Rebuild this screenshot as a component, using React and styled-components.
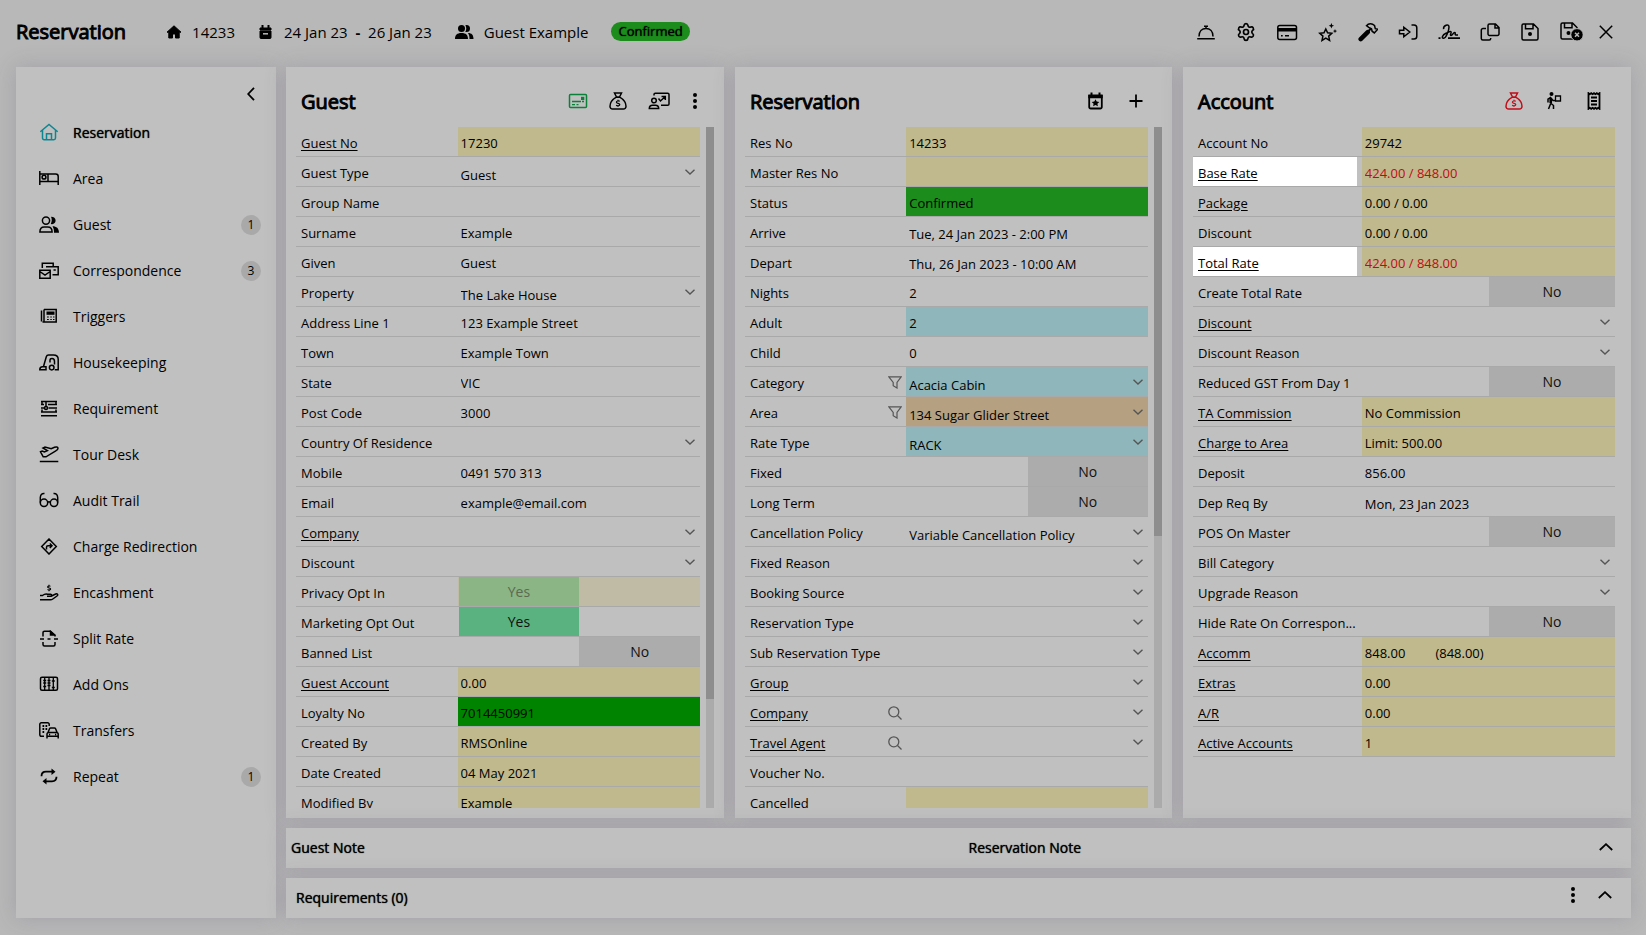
import React from 'react'
import styled, { createGlobalStyle, css } from 'styled-components'
import { Settings } from 'lucide-react'

const GlobalStyle = createGlobalStyle`
  * {
    box-sizing: border-box;
  }
  body {
    margin: 0;
    background: #b8b8b8;
    color: #000;
    font-family: 'Open Sans', 'Noto Sans', sans-serif;
    font-size: 13px;
  }
  button, input, select {
    font: inherit;
    color: inherit;
  }
`

const fills = {
  yellow: '#bfb98d',
  paleYellow: '#bfbba4',
  green: '#1c8c1c',
  darkGreen: '#008400',
  cyan: '#8fb6ba',
  tan: '#b5a182',
}

const heavy = css`
  -webkit-text-stroke: 1px currentColor;
`

const Page = styled.div`
  display: flex;
  flex-direction: column;
  height: 100vh;
  min-height: 600px;
  padding: 0 15px 17px 16px;
`

const TopBar = styled.header`
  display: flex;
  align-items: center;
  justify-content: space-between;
  flex: none;
  height: 67px;
  padding: 0 18px 4px 0;
`

const Summary = styled.div`
  display: flex;
  align-items: center;
  gap: 23px;
  font-size: 15px;
`

const PageTitle = styled.h1`
  ${heavy}
  margin: 0 17px 0 0;
  font-size: 20px;
  font-weight: 400;
`

const Fact = styled.div`
  display: flex;
  align-items: center;
  gap: 10px;
  white-space: pre;
`

const Pill = styled.span`
  height: 19px;
  padding: 0 7px;
  border-radius: 10px;
  background: ${fills.green};
  font-size: 13px;
  line-height: 19px;
  text-shadow: 0 0 1px #000;
`

const Toolbar = styled.div`
  display: flex;
  align-items: center;
  gap: ${(p) => p.$gap || 20}px;
`

const IconButton = styled.button`
  display: flex;
  align-items: center;
  justify-content: center;
  min-width: 10px;
  padding: 0;
  border: none;
  background: transparent;
  color: ${(p) => p.$color || '#000'};
  cursor: pointer;
`

const Body = styled.div`
  display: flex;
  flex: 1;
  gap: 10px;
  min-height: 0;
`

const Card = styled.section`
  display: flex;
  min-width: 0;
  background: #c0c0c0;
  box-shadow: 0 0 20px rgba(86, 76, 106, 0.24);
`

const Sidebar = styled(Card).attrs({ as: 'nav' })`
  flex: none;
  flex-direction: column;
  width: 260px;
`

const Collapse = styled(IconButton)`
  align-self: flex-end;
  width: 20px;
  height: 43px;
  margin: 0 15px 0 0;
  padding-top: 10px;
`

const NavItem = styled.a`
  display: grid;
  grid-template-columns: 20px 1fr 20px;
  align-items: center;
  gap: 14px;
  height: 46px;
  padding: 0 15px 2px 23px;
  font-size: 14px;
  color: #000;
  text-decoration: none;
  text-shadow: ${(p) => (p.$active ? '0 0 1px #000' : 'none')};

  svg {
    color: ${(p) => (p.$active ? '#0e8690' : '#000')};
  }
`

const Badge = styled.span`
  height: 20px;
  margin-top: 2px;
  border-radius: 50%;
  background: #a9a9a9;
  font-size: 12px;
  line-height: 20px;
  text-align: center;
`

const Main = styled.main`
  display: flex;
  flex: 1;
  flex-direction: column;
  gap: 10px;
  min-width: 0;
`

const Panels = styled.div`
  display: grid;
  flex: 1;
  grid-template-columns: 438fr 437fr 448fr;
  gap: 11px;
  min-height: 0;
`

const PanelCard = styled(Card)`
  flex-direction: column;
  min-height: 0;
  padding: 0 10px 10px;
`

const PanelHead = styled.div`
  display: flex;
  align-items: center;
  justify-content: space-between;
  flex: none;
  height: 60px;
  padding: 8px ${(p) => p.$inset}px 0 5px;
`

const PanelTitle = styled.h2`
  ${heavy}
  margin: 0;
  font-size: 20px;
  font-weight: 400;
`

const PanelBody = styled.div`
  display: flex;
  flex: 1;
  gap: 6px;
  min-height: 0;
`

const Fields = styled.div`
  flex: 1;
  min-width: 0;
  overflow-y: auto;
  scrollbar-width: none;
`

const Track = styled.div`
  width: 8px;
  background: #ababab;
`

const Thumb = styled.div`
  background: #8e8e8e;
`

const Row = styled.div`
  display: grid;
  grid-template-columns: 2fr 3fr;
  height: 30px;
  border-bottom: 1px solid #a9a9a9;
  background: linear-gradient(to right, transparent 40%, ${(p) => p.$fill || 'transparent'} 40%);
`

const LabelCell = styled.div`
  display: flex;
  align-items: center;
  justify-content: space-between;
  min-width: 0;
  margin-right: ${(p) => (p.$lit ? 5 : 0)}px;
  padding: 2px 4px 0 5px;
  background: ${(p) => (p.$lit ? '#fff' : 'transparent')};
  white-space: nowrap;

  a {
    color: #000;
    text-underline-offset: 2px;
  }
  svg {
    color: #555;
  }
`

const control = css`
  width: 100%;
  min-width: 0;
  height: 29px;
  border: none;
  outline: none;
  border-radius: 0;
  background: transparent;
  text-align: left;
`

const TextInput = styled.input`
  ${control}
  padding: ${(p) => (p.$date ? 4 : 2)}px 3px 0;
  color: ${(p) => (p.$red ? '#bf0c12' : '#000')};
`

const Amounts = styled.output`
  display: flex;
  align-items: center;
  gap: 30px;
  padding: 2px 3px 0;
`

const SelectBox = styled.div`
  display: grid;
  grid-template-columns: 1fr 15px;
  align-items: center;
  min-width: 0;

  svg {
    grid-area: 1 / 2;
    color: #555;
    pointer-events: none;
  }
`

const Select = styled.select`
  ${control}
  grid-area: 1 / 1 / 2 / 3;
  appearance: none;
  padding: 7px 15px 0 3px;
`

const Switch = styled.button`
  display: grid;
  grid-template-columns: 1fr 1fr;
  height: 29px;
  padding: 0 0 0 1px;
  border: none;
  background: ${(p) => (p.disabled ? fills.paleYellow : 'transparent')};
  font-size: 14px;
  line-height: 28px;
  color: ${(p) => (p.disabled ? '#5c6a52' : '#111')};
`

const SwitchHalf = styled.span`
  grid-column: ${(p) => (p.$on ? 1 : 2)};
  padding-top: 1px;
  background: ${(p) => (!p.$on ? '#acacac' : p.$muted ? '#8bb584' : '#5ab280')};
`

const Strip = styled(Card)`
  flex: none;
  display: grid;
  grid-template-columns: 1fr 1fr;
  align-items: center;
  height: 40px;
  padding: 0 ${(p) => p.$pad}px 2px;
`

const StripTitle = styled.h3`
  margin: 0;
  font-size: 14px;
  font-weight: 400;
  text-shadow: 0 0 1px #000;
`

const StripEnd = styled.div`
  display: flex;
  align-items: center;
  justify-content: space-between;
  padding: 0 ${(p) => p.$right}px 0 10px;
`

const StripActions = styled.div`
  display: flex;
  gap: 20px;
  margin-left: auto;
  padding-bottom: 4px;
`

const FLOPPY = 'M2.5 1h10L17 5.5v10a1.5 1.5 0 0 1-1.5 1.5h-13A1.5 1.5 0 0 1 1 15.5v-13A1.5 1.5 0 0 1 2.5 1zM4.5 1v4.8H12V1'

const bag = (
  <>
    <path d="M6.5 1h7l-2 4h-3zM8.300 5.200C4.500 7.500 2 11 2 14.200A2.600 2.600 0 0 0 4.600 17h10.800a2.600 2.600 0 0 0 2.600-2.800c0-3.200-2.500-6.700-6.300-9z" />
    <path strokeWidth="1.200" d="M11.800 9.300c-1.400-.8-3.500-.4-3.400.9.100 1.500 3.400.8 3.400 2.400 0 1.300-2.300 1.600-3.700.7M10 7.800v1M10 13.700v1" />
  </>
)

const dots = (
  <g fill="currentColor" stroke="none">
    <circle cx="2" cy="2" r="2" />
    <circle cx="2" cy="8" r="2" />
    <circle cx="2" cy="14" r="2" />
  </g>
)

// name: [width, height, drawing]
const glyphs = {
  houseSolid: [16, 14, <path fill="currentColor" strokeWidth="1" d="M8 .8L1 7.200h1.800V13h3.700V9h3v4h3.700V7.200H15z" />],
  calendarSolid: [16, 14, <><path fill="currentColor" strokeWidth="1" d="M2 3h11v2H2zM2 6h11v6.500a1 1 0 0 1-1 1H3a1 1 0 0 1-1-1z" /><path strokeWidth="2" d="M4.500 0v3M10.500 0v3" /><path stroke="#b8b8b8" d="M5 8.800h5" /></>],
  usersSolid: [19, 14, <g fill="currentColor" stroke="none"><circle cx="6.500" cy="3.500" r="3.500" /><path d="M0 14c0-4 2-6 6.500-6s6.500 2 6.500 6zM11.500 0a3.500 3.500 0 0 1 0 7c-.5 0-.8-.1-1.200-.2 1.300-1.900 1.300-4.700 0-6.600zM13 8c3.800 0 5.500 2 5.500 6h-4c0-2.600-.5-4.600-1.500-6z" /></g>],
  bell: [20, 18, <path d="M3 13.500C3 8.500 6 5.500 10 5.500s7 3 7 8M8 3.200h4M10 3.200v2.300M1.200 15.700h17.600" />],
  card: [22, 18, <><rect x="1.800" y="2.500" width="18.700" height="14" rx="2" /><path fill="currentColor" stroke="none" d="M2 5h18.500v3.500H2z" /><path d="M5 12.700h1.700M9 12.700h4" /></>],
  stars: [20, 20, <><path d="M7.800 7L9.600 10.800l4.200.5-3.100 2.800.9 4.300-3.800-2.200L4 18.400l.9-4.300-3.100-2.800 4.200-.5z" /><path fill="currentColor" stroke="none" d="M13.400 1l.8 1.900 1.900.8-1.900.8-.8 1.900-.8-1.900-1.900-.8 1.900-.8zM17 7l.6 1.500 1.500.6-1.500.6L17 11.200l-.6-1.500-1.500-.6 1.500-.6z" /></>],
  hammer: [20, 20, <><path strokeWidth="4.500" strokeLinecap="round" d="M2.700 17.200l7-7" /><path strokeWidth="2" d="M9 10.500l4-4" /><path d="M8.500 3.700c2-2.400 5.500-2.700 8-.2l.8 3.200 2.400.6-3.400 3.600-2.200-1.700-.6-2.400-2.800-1.400z" /></>],
  enter: [20, 16, <path d="M1.500 6.300h4.300V3.200L11.800 8l-6 4.800V9.700H1.500zM13.500 1H16a2.800 2.800 0 0 1 2.800 2.800v8.400A2.800 2.800 0 0 1 16 15h-2.500" />],
  signature: [22, 18, <><path d="M5.600 6.200C5 2.300 11 .2 11 4c0 4-3 11-5.300 11.300-2.500.3-1.500-3.500 2.300-5 2.500-1 4.500-2.300 5-1.600.8 1-1.500 3.500 0 3.800 1.600.2 2-3.200 3.800-3 1.200.2-.5 2.300 1.200 2.500H20" /><path strokeWidth="1.800" d="M10 15.200h12M.5 15.200h2" /></>],
  copy: [20, 18, <path d="M9.500 1h6L19 4.500v6.500a1.500 1.500 0 0 1-1.500 1.500h-8A1.500 1.500 0 0 1 8 11V2.500A1.500 1.500 0 0 1 9.500 1zM6 5.500H3a1.700 1.700 0 0 0-1.700 1.700v8.300A1.500 1.500 0 0 0 2.800 17h6.400a1.500 1.500 0 0 0 1.500-1.500v-.5M15 1.500V5h3.500" />],
  save: [20, 18, <g transform="translate(1 0)"><path d={FLOPPY} /><circle cx="9" cy="11" r="2" fill="currentColor" stroke="none" /></g>],
  saveClose: [23, 19, <><path d={FLOPPY} /><circle cx="8.500" cy="11" r="2" fill="currentColor" stroke="none" /><circle cx="17" cy="12.800" r="6.200" fill="currentColor" stroke="#b8b8b8" strokeWidth="1" /><path stroke="#b8b8b8" d="M15 10.800l4 4M19 10.800l-4 4" /></>],
  close: [14, 14, <path d="M.8.8l12.400 12.400M13.200.8L.8 13.200" />],
  left: [8, 14, <path strokeWidth="1.800" d="M7 .8L1.200 7 7 13.200" />],
  up: [14, 8, <path strokeWidth="1.800" d="M.8 7L7 1.200 13.200 7" />],
  down: [10, 6, <path strokeWidth="1.400" d="M.5.800L5 5 9.500.800" />],
  funnel: [14, 13, <path strokeWidth="1.200" d="M.8.800h12.400L9 6.500V12l-3.800-2.300V6.500z" />],
  search: [14, 14, <><circle cx="5.800" cy="5.800" r="5" strokeWidth="1.300" /><path strokeWidth="1.300" d="M9.500 9.500l4 4" /></>],
  plus: [20, 14, <path strokeWidth="1.800" d="M10 .5v13M3.500 7h13" />],
  dots: [4, 16, dots],
  idCard: [20, 16, <><rect x="1.500" y="1.500" width="17" height="13" rx="1" /><path d="M4 8.500h9M4 11.700h3M8.500 11.700h2M14 8.500h2" strokeWidth="1.300" /><path fill="currentColor" stroke="none" d="M13 3.800h3.300V7H13z" /></>],
  bag: [20, 18, bag],
  presenter: [22, 18, <><circle cx="6" cy="8.500" r="2.300" /><path d="M1.300 16.500c0-2.200 1.300-3.300 3.200-3.300h3c1.900 0 3.200 1.100 3.200 3.300zM6 3.500V2.500A1.300 1.300 0 0 1 7.300 1.200h12.400A1.300 1.300 0 0 1 21 2.500v9.500a1.300 1.300 0 0 1-1.300 1.300H13M10.500 6.500l2 2.500 4.500-4.200M13.500 4.500h3.800v3.500" /></>],
  calendarStar: [20, 18, <><path strokeWidth="1.800" d="M3.200 4h12.600v11a1.500 1.500 0 0 1-1.500 1.500H4.700A1.500 1.500 0 0 1 3.200 15z" /><path fill="currentColor" stroke="none" d="M2.300 2.500h14.400v3.700H2.300zM9.500 7.300l1.200 2.300 2.600.3-1.900 1.800.5 2.600-2.400-1.200-2.400 1.200.5-2.600-1.900-1.800 2.600-.3z" /><path d="M5.500 .5V4M13.500 .5V4" strokeWidth="2" /></>],
  carrier: [20, 18, <><circle cx="7.500" cy="2" r="2" fill="currentColor" stroke="none" /><path d="M4 10.500V7.200L6.500 5.500l2.500 3h3M6.500 6v5l3 2.500V17M6.500 12l-2 5" /><path strokeWidth="2.500" d="M6.800 6v5" /><path strokeWidth="1.300" d="M11.500 4h5v5h-5z" /></>],
  receipt: [20, 18, <><path strokeWidth="1.800" d="M4.500 1.200l1.300 1L7.200 1.200l1.400 1 1.400-1 1.400 1 1.400-1 1.400 1 1.300-1v15.600l-1.300-1-1.400 1-1.400-1-1.400 1-1.400-1-1.400 1-1.400-1-1.300 1z" /><path strokeWidth="1.800" d="M7 5.500h6M7 9h6M7 12.500h6" /></>],
  house: [20, 18, <path d="M1.300 8.700L10 1.400l8.700 7.300M3.500 7.300V15A1.700 1.700 0 0 0 5.200 16.700h9.600a1.700 1.700 0 0 0 1.700-1.700V7.300M7.500 16.500v-5.700h5v5.700" />],
  bed: [20, 16, <><path d="M.8 1v14M.8 11.500h18.500M19.200 15V6.500a2.500 2.500 0 0 0-2.500-2.500H9v7.500M9 4H.8" /><circle cx="5" cy="7.200" r="1.900" /></>],
  users: [20, 17, <><circle cx="7" cy="4.600" r="3.600" /><path d="M.9 16c0-3.300 2-5 4.300-5h3.600c2.300 0 4.300 1.700 4.300 5z" /><path fill="currentColor" stroke="none" d="M12 .8c3 0 4.600 1.500 4.600 3.800S15 8.400 12.800 8.200c-.7 0-1-.3-1-.5 1.200-2 1.300-4.700.2-6.900zM13.500 10.200c4 0 6.500 2 6.500 6.600h-5c0-2.800-.3-4.800-1.500-6.600z" /></>],
  mails: [20, 17, <><path d="M.8 8.200h10.400v8H.8zM.8 9.500L6 13l5.200-3.500M3.300 6V1.200h10.900V4M7 4.700h12.200v8H13.500M14.500 8h2.300" /></>],
  fax: [20, 16, <><path d="M2.500 2.500v11M5 1.500h12.200V14H3.500" /><path strokeWidth="1.200" d="M8 9h1.800M11.300 9h1.500M14 9h1.500M8 11.500h1.800M11.300 11.500h1.500M14 11.500h1.500" /><path fill="currentColor" stroke="none" d="M7.500 3.500h8v3.300h-8z" /><path d="M5 1.500V14" /></>],
  vacuum: [20, 17, <><path d="M.8 15.800c0-2 1-3 2.700-3H7v3zM4.500 12.500L7.300 2.800C7.700 1.500 8.500 1 9.500 1h5c3 0 4.700 1.800 4.700 4.300v10.500h-3.500M11 8.500V6.200C11 5 12 4.500 13 4.500c1.700 0 2.500 1 2.500 3v3" /><circle cx="12.700" cy="13.600" r="2.300" /></>],
  blinds: [20, 17, <><path d="M2 1.500h16M2 4.500h3M9 4.500h9M3 1.500v3M17 1.500v3M2 8h3M9.500 8h8.500M2 12h16M2 15.700h16M3 12V9.500M17 12V9.500" strokeWidth="1.500" /><circle cx="7" cy="8" r="1.500" /><path d="M7 2v4.500" /></>],
  plane: [20, 17, <path d="M.8 15.500h18.500M1.500 5.800l1.700-.8 2.200 1 3-1.400L4 2l2-1 6.200 1.800 3.300-1.500c1.700-.7 3.500-.3 3.500 1s-1 2-2.200 2.600L7 10.800H4.200z" />],
  glasses: [20, 16, <><circle cx="5" cy="10.800" r="3.700" /><circle cx="15" cy="10.800" r="3.700" /><path d="M8.500 10.300c1-.7 2-.7 3 0M1.300 10.500V5.500C1.500 3 2.500 1.200 5.500 1.500M18.700 10.500V5.500c-.2-2.500-1.200-4.300-4.200-4" /></>],
  turn: [20, 17, <path d="M10 1l7.300 7.500L10 16 2.700 8.500zM7.500 11.500V9.200c0-1 .5-1.500 1.500-1.500h3.500M10.800 5.500L13 7.700l-2.200 2.200" />],
  cashHand: [20, 17, <><path d="M1 11.500h2.500c2-1.500 3.500-1.700 5-1.200h3c1.500 0 1.500 2-.2 2H8M12 12.200l4.700-2.200c1.800-.7 2.700 1 1.300 2l-4.200 3c-.7.500-1.300.7-2.300.7H1" /><path strokeWidth="1.200" d="M11.500 2.300c-1.200-.6-2.900-.3-2.800.8.100 1.200 2.900.6 2.900 1.900 0 1-1.900 1.300-3.100.6M10 .8V2M10 6v1.200" /></>],
  pageBreak: [20, 17, <><path d="M4 6.500V2.700A1.500 1.500 0 0 1 5.500 1.200h6L16 5v1.500M4 12v2.500A1.500 1.500 0 0 0 5.500 16h9a1.500 1.500 0 0 0 1.500-1.500V12M1 9h4M8.500 9h3M15 9h4" /><path fill="currentColor" d="M11.500 1.500V5H15z" /></>],
  abacus: [20, 16, <><rect x="1.500" y="1.300" width="17" height="13" rx="1.500" /><path strokeWidth="1.300" d="M5.700 1.500v13M10 1.500v13M14.300 1.500v13" /><path strokeWidth="1.300" d="M4.200 4.500h3M8.500 4.500h3M4.200 7h3M8.500 7h3M4.200 10.500h3M8.500 9.500h3M12.800 5h3M12.800 11.500h3" /></>],
  shuttle: [20, 17, <><path d="M5 14.300H2.300A1.500 1.500 0 0 1 .8 12.800V2.300A1.500 1.500 0 0 1 2.300.8h6.400a1.500 1.500 0 0 1 1.500 1.500V4" /><path strokeWidth="1.800" d="M3.500 4h1.700M6.500 4h1.700M3.500 7h1.700M6.500 7h1.700M3.500 10h1.700" /><path d="M8 16.500v-4.200c0-1 .7-1.800 1.700-1.800h7.800c1 0 1.700.8 1.700 1.800v4.200M9 10.500l1.500-3.700c.2-.5.7-.8 1.200-.8h3.700c.5 0 1 .3 1.200.8l1.500 3.700M8 14.300h11.200M10 12.400h1.200M16 12.400h1.200" /></>],
  repeat: [20, 17, <><path strokeWidth="1.800" d="M2.500 8.200c0-3 1.800-4.500 4.500-4.500h7M17.500 8.800c0 3-1.800 4.500-4.500 4.500H6" /><path fill="currentColor" stroke="none" d="M12.500.5l4 3.200-4 3.200zM7.500 10.100l-4 3.200 4 3.200z" /></>],
}

const Glyph = ({ name }) => {
  const [width, height, drawing] = glyphs[name]
  return (
    <svg
      width={width}
      height={height}
      viewBox={`0 0 ${width} ${height}`}
      fill="none"
      stroke="currentColor"
      strokeWidth="1.500"
      aria-hidden="true"
    >
      {drawing}
    </svg>
  )
}

const navItems = [
  ['Reservation', 'house'],
  ['Area', 'bed'],
  ['Guest', 'users', 1],
  ['Correspondence', 'mails', 3],
  ['Triggers', 'fax'],
  ['Housekeeping', 'vacuum'],
  ['Requirement', 'blinds'],
  ['Tour Desk', 'plane'],
  ['Audit Trail', 'glasses'],
  ['Charge Redirection', 'turn'],
  ['Encashment', 'cashHand'],
  ['Split Rate', 'pageBreak'],
  ['Add Ons', 'abacus'],
  ['Transfers', 'shuttle'],
  ['Repeat', 'repeat', 1],
]

const text = (label, value = '', more) => ({ kind: 'text', label, value, ...more })
const locked = (label, value = '', more) => text(label, value, { fill: 'yellow', readOnly: true, ...more })
const select = (label, value = '', more) => ({ kind: 'select', label, value, ...more })
const toggle = (label, on, more) => ({ kind: 'toggle', label, on, ...more })
const link = true

const guestFields = [
  locked('Guest No', '17230', { link }),
  select('Guest Type', 'Guest'),
  text('Group Name'),
  text('Surname', 'Example'),
  text('Given', 'Guest'),
  select('Property', 'The Lake House'),
  text('Address Line 1', '123 Example Street'),
  text('Town', 'Example Town'),
  text('State', 'VIC'),
  text('Post Code', '3000'),
  select('Country Of Residence'),
  text('Mobile', '0491 570 313'),
  text('Email', 'example@email.com'),
  select('Company', '', { link }),
  select('Discount'),
  toggle('Privacy Opt In', true, { disabled: true }),
  toggle('Marketing Opt Out', true),
  toggle('Banned List', false),
  locked('Guest Account', '0.00', { link }),
  locked('Loyalty No', '7014450991', { fill: 'darkGreen' }),
  locked('Created By', 'RMSOnline'),
  locked('Date Created', '04 May 2021'),
  locked('Modified By', 'Example'),
]

const reservationFields = [
  locked('Res No', '14233'),
  locked('Master Res No'),
  locked('Status', 'Confirmed', { fill: 'green' }),
  text('Arrive', 'Tue, 24 Jan 2023 - 2:00 PM', { date: true }),
  text('Depart', 'Thu, 26 Jan 2023 - 10:00 AM', { date: true }),
  text('Nights', '2'),
  text('Adult', '2', { fill: 'cyan' }),
  text('Child', '0'),
  select('Category', 'Acacia Cabin', { fill: 'cyan', icon: 'funnel' }),
  select('Area', '134 Sugar Glider Street', { fill: 'tan', icon: 'funnel' }),
  select('Rate Type', 'RACK', { fill: 'cyan' }),
  toggle('Fixed', false),
  toggle('Long Term', false),
  select('Cancellation Policy', 'Variable Cancellation Policy'),
  select('Fixed Reason'),
  select('Booking Source'),
  select('Reservation Type'),
  select('Sub Reservation Type'),
  select('Group', '', { link }),
  select('Company', '', { link, icon: 'search' }),
  select('Travel Agent', '', { link, icon: 'search' }),
  text('Voucher No.'),
  locked('Cancelled'),
]

const accountFields = [
  locked('Account No', '29742'),
  locked('Base Rate', '424.00 / 848.00', { link, lit: true, red: true }),
  locked('Package', '0.00 / 0.00', { link }),
  locked('Discount', '0.00 / 0.00'),
  locked('Total Rate', '424.00 / 848.00', { link, lit: true, red: true }),
  toggle('Create Total Rate', false),
  select('Discount', '', { link }),
  select('Discount Reason'),
  toggle('Reduced GST From Day 1', false),
  locked('TA Commission', 'No Commission', { link }),
  locked('Charge to Area', 'Limit: 500.00', { link }),
  text('Deposit', '856.00'),
  text('Dep Req By', 'Mon, 23 Jan 2023', { date: true }),
  toggle('POS On Master', false),
  select('Bill Category'),
  select('Upgrade Reason'),
  toggle('Hide Rate On Correspon...', false),
  { kind: 'amounts', label: 'Accomm', value: ['848.00', '(848.00)'], fill: 'yellow', link },
  locked('Extras', '0.00', { link }),
  locked('A/R', '0.00', { link }),
  locked('Active Accounts', '1', { link }),
]

const Value = ({ id, field }) => {
  const named = { id, 'aria-labelledby': `${id}-label` }
  if (field.kind === 'select') {
    return (
      <SelectBox>
        <Select {...named} defaultValue={field.value}>
          <option>{field.value}</option>
        </Select>
        <Glyph name="down" />
      </SelectBox>
    )
  }
  if (field.kind === 'toggle') {
    return (
      <Switch {...named} type="button" role="switch" aria-checked={field.on} disabled={field.disabled}>
        <SwitchHalf $on={field.on} $muted={field.disabled}>
          {field.on ? 'Yes' : 'No'}
        </SwitchHalf>
      </Switch>
    )
  }
  if (field.kind === 'amounts') {
    return (
      <Amounts {...named}>
        {field.value.map((amount) => (
          <span key={amount}>{amount}</span>
        ))}
      </Amounts>
    )
  }
  return (
    <TextInput
      {...named}
      defaultValue={field.value}
      readOnly={field.readOnly}
      $date={field.date}
      $red={field.red}
    />
  )
}

const Field = ({ id, field }) => (
  <Row $fill={fills[field.fill]}>
    <LabelCell $lit={field.lit}>
      {field.link ? (
        <a href="#" id={`${id}-label`}>{field.label}</a>
      ) : (
        <label htmlFor={id} id={`${id}-label`}>{field.label}</label>
      )}
      {field.icon && (
        <IconButton aria-label={`${field.icon} ${field.label}`}>
          <Glyph name={field.icon} />
        </IconButton>
      )}
    </LabelCell>
    <Value id={id} field={field} />
  </Row>
)

const Panel = ({ title, fields, inset, scroll, actions }) => (
  <PanelCard>
    <PanelHead $inset={inset}>
      <PanelTitle>{title}</PanelTitle>
      <Toolbar>
        {actions.map(([name, label, color]) => (
          <IconButton key={name} aria-label={label} $color={color}>
            <Glyph name={name} />
          </IconButton>
        ))}
      </Toolbar>
    </PanelHead>
    <PanelBody>
      <Fields>
        {fields.map((field, i) => (
          <Field key={i} id={`${title.toLowerCase()}-${i}`} field={field} />
        ))}
      </Fields>
      {scroll ? (
        <Track>
          <Thumb style={{ height: `${scroll}%` }} />
        </Track>
      ) : (
        <span />
      )}
    </PanelBody>
  </PanelCard>
)

const tools = [
  ['card', 'Payments'],
  ['stars', 'Extras'],
  ['hammer', 'Maintenance'],
  ['enter', 'Check in'],
  ['signature', 'Signature'],
  ['copy', 'Copy'],
  ['save', 'Save'],
  ['saveClose', 'Save and close'],
]

export default function App() {
  return (
    <Page>
      <GlobalStyle />
      <TopBar>
        <Summary>
          <PageTitle>Reservation</PageTitle>
          <Fact><Glyph name="houseSolid" />14233</Fact>
          <Fact>
            <Glyph name="calendarSolid" />
            <span>24 Jan 23  <b>-</b>  26 Jan 23</span>
          </Fact>
          <Fact><Glyph name="usersSolid" />Guest Example</Fact>
          <Pill>Confirmed</Pill>
        </Summary>
        <Toolbar $gap={16}>
          <Toolbar>
            <IconButton aria-label="Services"><Glyph name="bell" /></IconButton>
            <IconButton aria-label="Settings"><Settings size={20} strokeWidth={2} /></IconButton>
            {tools.map(([name, label]) => (
              <IconButton key={name} aria-label={label}>
                <Glyph name={name} />
              </IconButton>
            ))}
          </Toolbar>
          <IconButton aria-label="Close"><Glyph name="close" /></IconButton>
        </Toolbar>
      </TopBar>
      <Body>
        <Sidebar>
          <Collapse aria-label="Collapse menu"><Glyph name="left" /></Collapse>
          {navItems.map(([label, icon, count], i) => (
            <NavItem key={label} href="#" $active={i === 0}>
              <Glyph name={icon} />
              {label}
              {count && <Badge>{count}</Badge>}
            </NavItem>
          ))}
        </Sidebar>
        <Main>
          <Panels>
            <Panel
              title="Guest"
              fields={guestFields}
              inset={14}
              scroll={84}
              actions={[
                ['idCard', 'Guest card', '#0b8038'],
                ['bag', 'Guest account'],
                ['presenter', 'Guest statistics'],
                ['dots', 'More'],
              ]}
            />
            <Panel
              title="Reservation"
              fields={reservationFields}
              inset={16}
              scroll={60}
              actions={[
                ['calendarStar', 'Events'],
                ['plus', 'Add'],
              ]}
            />
            <Panel
              title="Account"
              fields={accountFields}
              inset={17}
              actions={[
                ['bag', 'Account balance', '#c00d18'],
                ['carrier', 'Move charges'],
                ['receipt', 'Receipt'],
              ]}
            />
          </Panels>
          <Strip $pad={5}>
            <StripTitle>Guest Note</StripTitle>
            <StripEnd $right={13}>
              <StripTitle>Reservation Note</StripTitle>
              <IconButton aria-label="Expand notes"><Glyph name="up" /></IconButton>
            </StripEnd>
          </Strip>
          <Strip $pad={10}>
            <StripTitle>Requirements (0)</StripTitle>
            <StripEnd $right={9}>
              <StripActions>
                <IconButton aria-label="More"><Glyph name="dots" /></IconButton>
                <IconButton aria-label="Expand requirements"><Glyph name="up" /></IconButton>
              </StripActions>
            </StripEnd>
          </Strip>
        </Main>
      </Body>
    </Page>
  )
}
